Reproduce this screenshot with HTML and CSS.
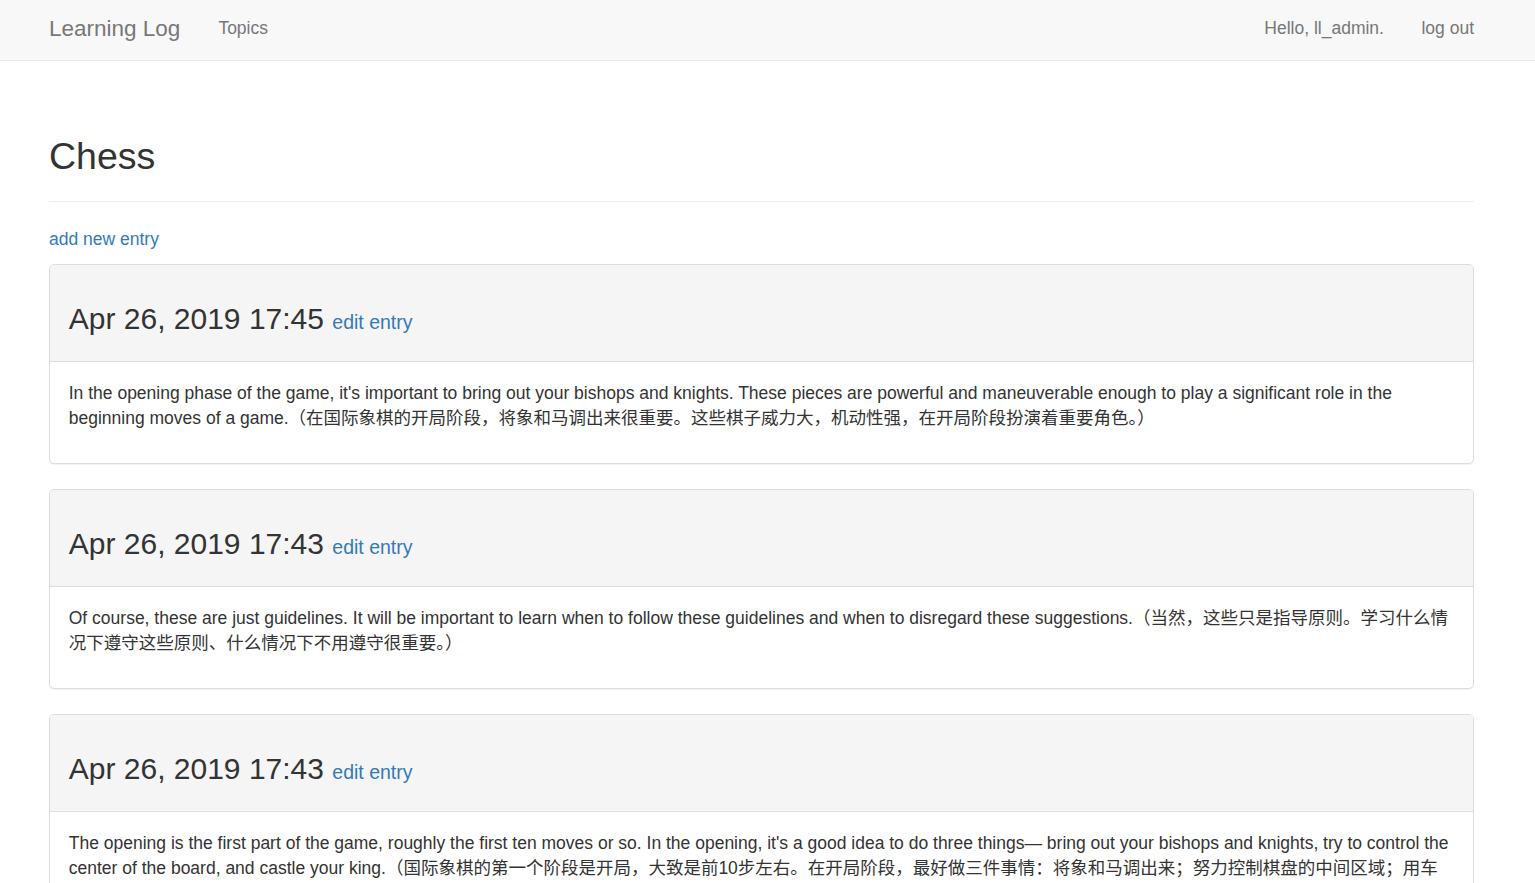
FILE: index.html
```html
<!DOCTYPE html>
<html lang="en">
<head>
<meta charset="utf-8">
<title>Learning Log</title>
<link rel="stylesheet" href="styles.css">
</head>
<body>
<nav class="navbar">
  <div class="container nav-inner">
    <a class="brand" href="#">Learning Log</a>
    <ul class="nav-links">
      <li><a href="#">Topics</a></li>
    </ul>
    <div class="nav-right">
      <span class="nav-text">Hello, ll_admin.</span>
      <a class="nav-link" href="#">log out</a>
    </div>
  </div>
</nav>
<main class="container main">
  <div class="page-header">
    <h2>Chess</h2>
  </div>
  <div>
    <p class="add-entry"><a href="#">add new entry</a></p>

    <div class="panel">
      <div class="panel-heading">
        <h3>Apr 26, 2019 17:45 <small><a href="#">edit entry</a></small></h3>
      </div>
      <div class="panel-body">
        <p>In the opening phase of the game, it's important to bring out your bishops and knights. These pieces are powerful and maneuverable enough to play a significant role in the beginning moves of a game.（在国际象棋的开局阶段，将象和马调出来很重要。这些棋子威力大，机动性强，在开局阶段扮演着重要角色。）</p>
      </div>
    </div>

    <div class="panel">
      <div class="panel-heading">
        <h3>Apr 26, 2019 17:43 <small><a href="#">edit entry</a></small></h3>
      </div>
      <div class="panel-body">
        <p>Of course, these are just guidelines. It will be important to learn when to follow these guidelines and when to disregard these suggestions.（当然，这些只是指导原则。学习什么情况下遵守这些原则、什么情况下不用遵守很重要。）</p>
      </div>
    </div>

    <div class="panel">
      <div class="panel-heading">
        <h3>Apr 26, 2019 17:43 <small><a href="#">edit entry</a></small></h3>
      </div>
      <div class="panel-body">
        <p>The opening is the first part of the game, roughly the first ten moves or so. In the opening, it's a good idea to do three things— bring out your bishops and knights, try to control the center of the board, and castle your king.（国际象棋的第一个阶段是开局，大致是前10步左右。在开局阶段，最好做三件事情：将象和马调出来；努力控制棋盘的中间区域；用车王易位将国王保护起来。）</p>
      </div>
    </div>
  </div>
</main>
</body>
</html>
```

FILE: styles.css
```css
* {
  box-sizing: border-box;
}

html, body {
  margin: 0;
  padding: 0;
}

body {
  background: #fff;
  color: #333;
  font-family: "Liberation Sans", Arial, "Noto Sans CJK SC", sans-serif;
  font-size: 17.5px;
  line-height: 25px;
}

a {
  color: #337ab7;
  text-decoration: none;
}

.container {
  padding: 0 61px 0 49px;
}

/* navbar */
.navbar {
  background: #f8f8f8;
  border-bottom: 1px solid #e7e7e7;
}

.nav-inner {
  display: flex;
  align-items: center;
  height: 60px;
  padding-bottom: 3px;
}

.brand {
  color: #777;
  font-size: 22.5px;
  line-height: 25px;
}

.nav-links {
  list-style: none;
  margin: 0 0 0 38px;
  padding: 0;
  display: flex;
}

.nav-links a {
  color: #777;
  font-size: 17.5px;
  line-height: 25px;
}

.nav-right {
  margin-left: auto;
  display: flex;
  align-items: center;
  gap: 37.5px;
  color: #777;
}

.nav-link {
  color: #777;
}

/* page */
.main {
  padding-top: 75px;
}

.page-header {
  padding-bottom: 11.25px;
  margin-bottom: 25px;
  border-bottom: 1px solid #eee;
}

.page-header h2 {
  margin: 0 0 12.5px;
  font-size: 37.5px;
  line-height: 41.25px;
  font-weight: 500;
  color: #333;
}

p {
  margin: 0 0 12.5px;
}

.add-entry {
  margin-bottom: 11.5px;
}

.panel {
  background: #fff;
  border: 1px solid #ddd;
  border-radius: 5px;
  box-shadow: 0 1px 1px rgba(0, 0, 0, 0.05);
  margin-bottom: 25px;
}

.panel-heading {
  background: #f5f5f5;
  border-bottom: 1px solid #ddd;
  border-radius: 4px 4px 0 0;
  padding: 13px 18.75px 12.5px;
}

.panel-heading h3 {
  margin: 24px 0 13.5px;
  font-size: 30px;
  line-height: 33px;
  font-weight: 500;
  color: #333;
}

.panel-heading small {
  font-size: 65%;
  font-weight: normal;
  line-height: 1;
}

.panel-body {
  padding: 19.5px 18.75px 18.75px;
}

.panel-body p {
  margin-bottom: 12.75px;
}
```
